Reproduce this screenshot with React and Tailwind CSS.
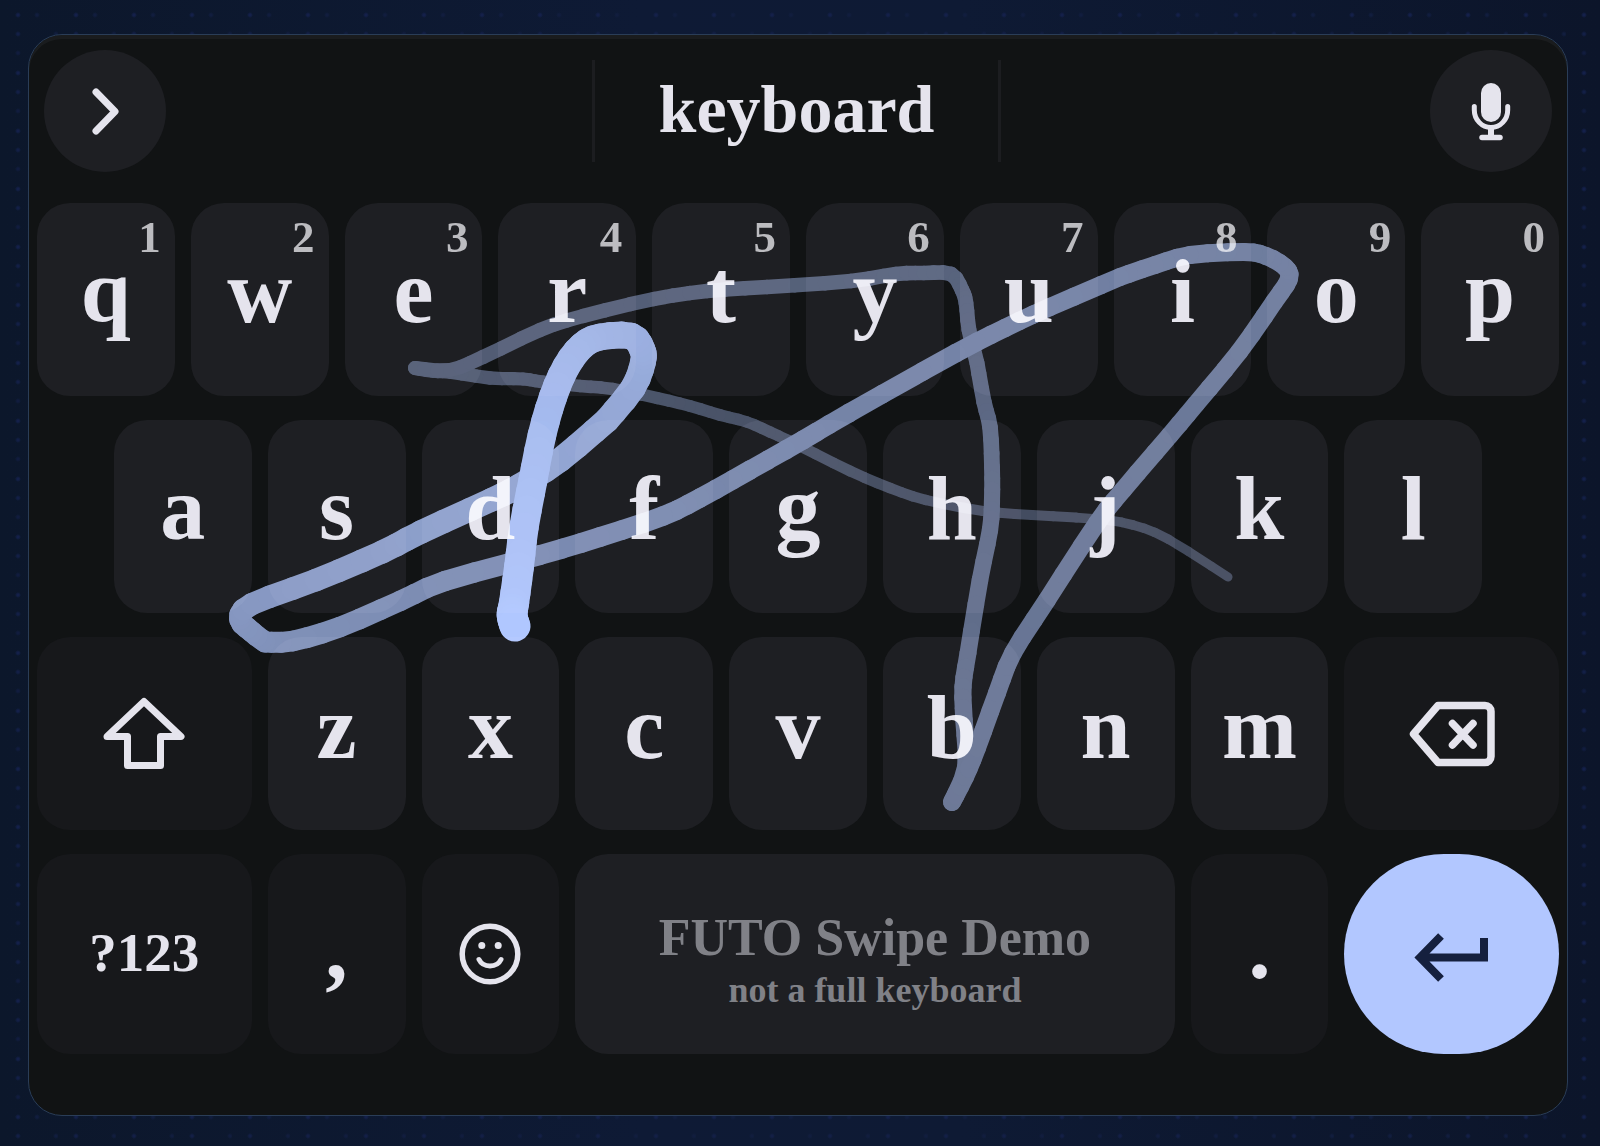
import React from "react";

const numberRow = [
  ["q", "1"],
  ["w", "2"],
  ["e", "3"],
  ["r", "4"],
  ["t", "5"],
  ["y", "6"],
  ["u", "7"],
  ["i", "8"],
  ["o", "9"],
  ["p", "0"],
];
const homeRow = ["a", "s", "d", "f", "g", "h", "j", "k", "l"];
const bottomRow = ["z", "x", "c", "v", "b", "n", "m"];

// Each stroke runs between two [width, strength] pairs.
const strokes = [
  {
    from: [9, 0.3],
    to: [14, 0.4],
    points: [
      [1228, 577], [1168, 539], [1133, 525], [1096, 519], [1032, 515],
      [983, 511], [926, 500], [890, 488], [850, 471], [800, 446],
      [770, 432], [747, 422], [720, 415], [690, 406], [657, 398],
      [613, 389], [580, 386], [543, 382], [523, 379], [490, 378],
      [450, 372], [433, 371], [415, 368],
    ],
  },
  {
    from: [14, 0.4],
    to: [15, 0.46],
    points: [
      [415, 368], [450, 370], [483, 357], [540, 330], [583, 316],
      [654, 299], [707, 291], [767, 287], [851, 281], [896, 274],
      [924, 273], [951, 274], [962, 290], [966, 303], [969, 330],
      [977, 363],
    ],
  },
  {
    from: [15, 0.46],
    to: [18, 0.53],
    points: [
      [977, 363], [984, 402], [990, 427], [992, 467], [992, 500],
      [990, 530], [980, 580], [968, 653], [963, 687], [964, 720],
      [966, 767], [952, 802],
    ],
  },
  {
    from: [18, 0.53],
    to: [18, 0.6],
    points: [
      [952, 802], [965, 777], [977, 748], [997, 693], [1013, 653],
      [1047, 600], [1097, 523], [1123, 490], [1170, 435], [1196, 404],
      [1239, 352], [1274, 302], [1289, 279], [1285, 267], [1266, 256],
      [1244, 252], [1190, 255], [1155, 265], [1120, 277],
    ],
  },
  {
    from: [18, 0.6],
    to: [21, 0.7],
    points: [
      [1120, 277], [1050, 307], [1005, 328], [956, 353], [849, 413],
      [803, 440], [750, 470], [700, 498], [663, 516], [600, 537],
      [540, 555], [445, 581], [400, 601], [340, 627], [293, 641],
      [265, 642],
    ],
  },
  {
    from: [21, 0.7],
    to: [25, 0.82],
    points: [
      [265, 642], [252, 632], [240, 619], [252, 604], [316, 580],
      [382, 552], [421, 532], [491, 500], [519, 486], [560, 460],
      [607, 420],
    ],
  },
  {
    from: [25, 0.82],
    to: [29, 0.94],
    points: [
      [607, 420], [633, 388], [643, 362], [642, 349], [631, 336],
      [600, 337], [582, 346], [566, 367], [553, 397], [542, 435],
      [533, 480],
    ],
  },
  {
    from: [29, 0.94],
    to: [31, 1],
    points: [[533, 480], [524, 527], [519, 567], [514, 603], [512, 615], [515, 626]],
  },
];

const STEPS = 3;
const mix = (a, b, t) => a + (b - a) * t;
const spline = (a, b, c, d, t) =>
  0.5 *
  (2 * b +
    (c - a) * t +
    (2 * a - 5 * b + 4 * c - d) * t * t +
    (3 * b - a - 3 * c + d) * t * t * t);

const buildSegments = () => {
  const segments = [];
  strokes.forEach(({ from, to, points }) => {
    const count = (points.length - 1) * STEPS;
    let last = points[0];
    for (let n = 1; n <= count; n++) {
      const i = Math.floor((n - 1) / STEPS);
      const t = (n - i * STEPS) / STEPS;
      const a = points[Math.max(i - 1, 0)];
      const b = points[i];
      const c = points[i + 1];
      const d = points[Math.min(i + 2, points.length - 1)];
      const next = [
        spline(a[0], b[0], c[0], d[0], t),
        spline(a[1], b[1], c[1], d[1], t),
      ];
      const strength = mix(from[1], to[1], n / count);
      segments.push({
        from: last,
        to: next,
        width: mix(from[0], to[0], n / count),
        color: `rgb(${Math.round(170 * strength)}, ${Math.round(194 * strength)}, ${Math.round(255 * strength)})`,
      });
      last = next;
    }
  });
  return segments;
};

const segments = buildSegments();

const SwipeTrail = () => (
  <svg
    className="pointer-events-none absolute inset-0 h-full w-full mix-blend-screen"
    viewBox="29 35 1538 1080"
    preserveAspectRatio="none"
    aria-hidden="true"
  >
    {segments.map((s, i) => (
      <line
        key={i}
        x1={s.from[0]}
        y1={s.from[1]}
        x2={s.to[0]}
        y2={s.to[1]}
        stroke={s.color}
        strokeWidth={s.width}
        strokeLinecap="round"
      />
    ))}
  </svg>
);

const Key = ({ className = "", muted = false, hint, children, ...props }) => (
  <button
    type="button"
    className={`relative mx-2 flex items-center justify-center rounded-[33px] text-[90px] leading-none ${
      muted ? "bg-[#17181b]" : "bg-[#1e1f23]"
    } ${className}`}
    {...props}
  >
    {hint && (
      <span className="absolute top-3 right-3.5 text-[45px] leading-none text-[#bcbcc0]">
        {hint}
      </span>
    )}
    {children}
  </button>
);

const ChevronIcon = () => (
  <svg width="40" height="54" viewBox="0 0 40 54" fill="none" stroke="currentColor" strokeWidth="7" strokeLinecap="round" strokeLinejoin="round">
    <path d="M11 8L30 27.500L11 47" />
  </svg>
);

const MicIcon = () => (
  <svg width="48" height="60" viewBox="0 0 48 60" fill="none" stroke="currentColor" strokeLinecap="round">
    <rect x="14" y="2" width="20" height="39" rx="10" fill="currentColor" stroke="none" />
    <path d="M7.300 25.500v3.500a16.700 17.500 0 0 0 33.400 0V25.500" strokeWidth="5" />
    <path d="M24 47v9" strokeWidth="6" strokeLinecap="butt" />
    <path d="M15 56.500h18" strokeWidth="5.500" />
  </svg>
);

const ShiftIcon = () => (
  <svg width="84" height="76" viewBox="0 0 84 76" fill="none" stroke="currentColor" strokeWidth="7" strokeLinejoin="round">
    <path d="M42 5.500L79 40.500H58.500V69.500H25.500V40.500H5Z" />
  </svg>
);

const BackspaceIcon = () => (
  <svg width="90" height="66" viewBox="0 0 90 66" fill="none" stroke="currentColor" strokeWidth="7.500" strokeLinecap="round" strokeLinejoin="round">
    <path d="M31 4.500H78a6 6 0 0 1 6 6V55.500a6 6 0 0 1-6 6H31L6.500 33Z" />
    <path d="M45.500 22.500L66 44M66 22.500L45.500 44" />
  </svg>
);

const SmileIcon = () => (
  <svg width="62" height="62" viewBox="0 0 62 62" fill="none" stroke="currentColor" strokeLinecap="round">
    <circle cx="31" cy="31" r="27.800" strokeWidth="5.500" />
    <circle cx="22.800" cy="22.500" r="3.500" fill="currentColor" stroke="none" />
    <circle cx="39.200" cy="22.500" r="3.500" fill="currentColor" stroke="none" />
    <path d="M20 36.500C24 45 38 45 42 36.500" strokeWidth="5" />
  </svg>
);

const EnterIcon = () => (
  <svg width="78" height="60" viewBox="0 0 78 60" fill="none" stroke="currentColor" strokeWidth="8">
    <path d="M28 12L7 33.500L28 55M7 33.500H71V14" />
  </svg>
);

const roundButton =
  "flex size-[122px] shrink-0 items-center justify-center rounded-full bg-[#1e1f23]";

const App = () => {
  return (
    <main className="min-h-screen bg-[#0d172d] bg-[radial-gradient(circle_at_18px_15px,#14204a_1px,transparent_3px),radial-gradient(circle_at_37px_15px,#111d3e_1px,transparent_3px),radial-gradient(circle_at_56px_34px,#111d3e_1px,transparent_3px),radial-gradient(circle_at_18px_34px,#131f46_1px,transparent_3px),radial-gradient(circle_at_18px_53px,#111c3e_1px,transparent_3px),linear-gradient(90deg,#0c172b,#0e1a35_40%,#0e1a34_60%,#0c152a)] bg-size-[58px_58px,58px_58px,58px_58px,58px_58px,58px_58px,auto] pt-[34px] pr-8 pb-[30px] pl-7 font-['Liberation_Serif',serif] font-bold text-[#e5e4ed]">
      <div className="relative isolate overflow-hidden rounded-[34px] border border-[#2a3d57] bg-[#111314] pb-[61px] shadow-[inset_0_4px_0_#1a1c1e]">
        {/* Suggestion bar */}
        <div className="flex items-center gap-[22px] p-[15px]">
          <button type="button" aria-label="More" className={roundButton}>
            <ChevronIcon />
          </button>
          <div className="grid h-[102px] flex-1 grid-cols-3">
            <div className="border-r-3 border-[#1c1d20]"></div>
            <button
              type="button"
              className="border-r-3 border-[#1c1d20] pb-1 text-[68px] leading-none"
            >
              keyboard
            </button>
            <div></div>
          </div>
          <button type="button" aria-label="Voice input" className={roundButton}>
            <MicIcon />
          </button>
        </div>

        {/* Keys */}
        <div className="flex flex-col gap-6 pt-4">
          <div className="grid h-[193px] grid-cols-20">
            {numberRow.map(([letter, digit]) => (
              <Key key={letter} hint={digit} className="col-span-2 pb-4">
                {letter}
              </Key>
            ))}
          </div>

          <div className="grid h-[193px] grid-cols-20">
            {homeRow.map((letter, index) => (
              <Key
                key={letter}
                className={
                  index === 0 ? "col-span-2 col-start-2 pb-4" : "col-span-2 pb-4"
                }
              >
                {letter}
              </Key>
            ))}
          </div>

          <div className="grid h-[193px] grid-cols-20">
            <Key muted className="col-span-3" aria-label="Shift">
              <ShiftIcon />
            </Key>
            {bottomRow.map((letter) => (
              <Key key={letter} className="col-span-2 pb-3">
                {letter}
              </Key>
            ))}
            <Key muted className="col-span-3" aria-label="Backspace">
              <BackspaceIcon />
            </Key>
          </div>

          <div className="grid h-[200px] grid-cols-20">
            <Key muted className="col-span-3 pb-1">
              <span className="text-[55px] leading-none">?123</span>
            </Key>
            <Key muted className="col-span-2 pb-3">,</Key>
            <Key muted className="col-span-2" aria-label="Emoji">
              <SmileIcon />
            </Key>
            <Key className="col-span-8 flex-col gap-2 pt-3 text-[#808187]">
              <span className="text-[52px] leading-none">FUTO Swipe Demo</span>
              <span className="text-[36px] leading-none">not a full keyboard</span>
            </Key>
            <Key muted className="col-span-2 pb-3">.</Key>
            <button
              type="button"
              aria-label="Enter"
              className="col-span-3 mx-2 flex items-center justify-center rounded-full bg-[#b2c7ff] text-[#15203e]"
            >
              <EnterIcon />
            </button>
          </div>
        </div>

        <SwipeTrail />
      </div>
    </main>
  );
};

export default App;
